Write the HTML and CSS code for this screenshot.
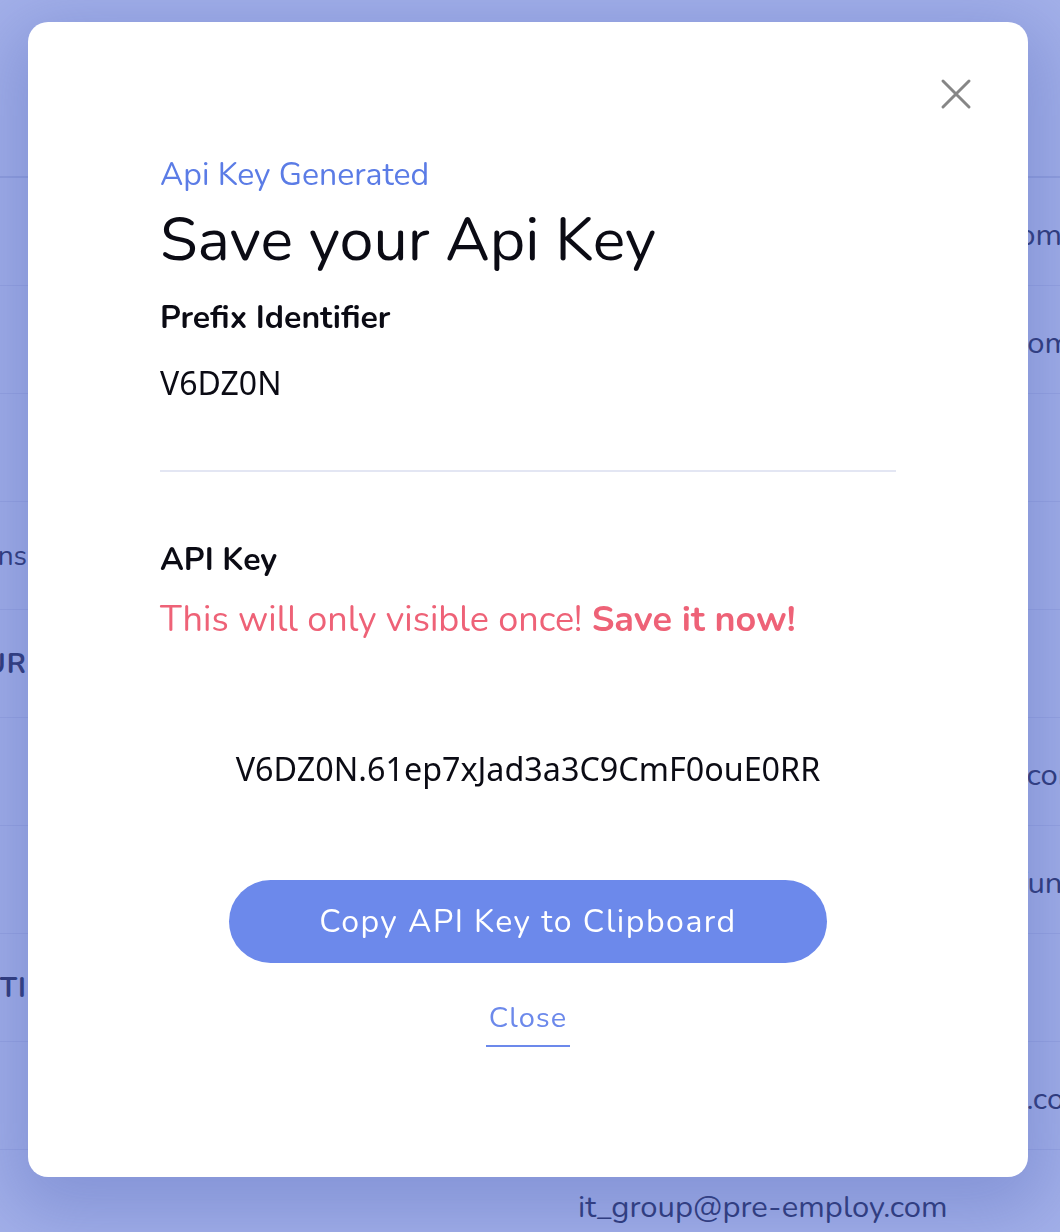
FILE: index.html
```html
<!DOCTYPE html>
<html lang="en">
<head>
<meta charset="utf-8">
<title>Save your Api Key</title>
<link rel="stylesheet" href="styles.css">
</head>
<body>
<div class="page">
  <div class="page-header"></div>
  <div class="table">
    <div class="row"><div class="cell-left"></div><div class="cell-mid"></div><div class="cell-email">recruitmentteam@pre-employ.com</div></div>
    <div class="row"><div class="cell-left"></div><div class="cell-mid"></div><div class="cell-email">compliancegroup@pre-employ.com</div></div>
    <div class="row"><div class="cell-left"></div><div class="cell-mid"></div><div class="cell-email"></div></div>
    <div class="row"><div class="cell-left"><span>Operations</span></div><div class="cell-mid"></div><div class="cell-email"></div></div>
    <div class="row"><div class="cell-left caps"><span>FEATUR</span></div><div class="cell-mid"></div><div class="cell-email"></div></div>
    <div class="row"><div class="cell-left"></div><div class="cell-mid"></div><div class="cell-email">talent.acquisitions@pre-employ.com</div></div>
    <div class="row"><div class="cell-left"></div><div class="cell-mid"></div><div class="cell-email">backgroundchecks@preemploy.fund</div></div>
    <div class="row"><div class="cell-left caps"><span>BUDGETI</span></div><div class="cell-mid"></div><div class="cell-email"></div></div>
    <div class="row"><div class="cell-left"></div><div class="cell-mid"></div><div class="cell-email">onboarding_teams@pre-employ.com</div></div>
    <div class="row"><div class="cell-left"></div><div class="cell-mid"></div><div class="cell-email">it_group@pre-employ.com</div></div>
  </div>
</div>

<div class="modal" role="dialog" aria-labelledby="modal-title">
  <button class="modal-close" aria-label="Close">
    <svg width="32" height="32" viewBox="0 0 32 32"><path d="M3 3 L29 29 M29 3 L3 29" stroke="#868686" stroke-width="3" stroke-linecap="round" fill="none"/></svg>
  </button>
  <div class="modal-body">
    <div class="subtitle">Api Key Generated</div>
    <h1 class="title" id="modal-title">Save your Api Key</h1>
    <div class="label">Prefix Identifier</div>
    <div class="value">V6DZ0N</div>
    <hr class="divider">
    <div class="label label-api">API Key</div>
    <div class="warning">This will only visible once! <strong>Save it now!</strong></div>
    <div class="key">V6DZ0N.61ep7xJad3a3C9CmF0ouE0RR</div>
    <div class="actions">
      <button class="copy-btn">Copy API Key to Clipboard</button>
      <a class="close-link" href="#">Close</a>
    </div>
  </div>
</div>
</body>
</html>
```
FILE: styles.css
```css
* { box-sizing: border-box; }
html, body { margin: 0; padding: 0; }
body {
  width: 1060px;
  height: 1232px;
  overflow: hidden;
  background: #a4b1ea;
  font-family: Nunito, Lato, "Noto Sans", sans-serif;
}
.page { width: 1060px; }
.page-header {
  height: 178px;
  border-bottom: 2px solid rgba(70, 90, 180, 0.18);
}
.table { display: flex; flex-direction: column; }
.row {
  display: grid;
  grid-template-columns: 27px 551px 1fr;
  height: 108px;
  align-items: center;
  border-bottom: 1px solid rgba(70, 90, 180, 0.12);
  color: #2d3877;
  white-space: nowrap;
}
.cell-left {
  overflow: hidden;
  display: flex;
  justify-content: flex-end;
  font-size: 28px;
}
.cell-left.caps { font-weight: 700; letter-spacing: 1px; }
.cell-email { overflow: hidden; font-size: 31px; padding-top: 6px; }

.modal {
  position: fixed;
  left: 28px;
  top: 22px;
  width: 1000px;
  height: 1155px;
  background: #fff;
  border-radius: 20px;
  box-shadow: 0 20px 70px 20px rgba(70, 90, 175, 0.33);
}
.modal-close {
  position: absolute;
  top: 56px;
  right: 56px;
  width: 32px;
  height: 32px;
  padding: 0;
  border: 0;
  background: none;
  cursor: pointer;
}
.modal-close svg { display: block; }
.modal-body {
  padding: 132px 132px 0;
  display: flex;
  flex-direction: column;
  align-items: flex-start;
}
.subtitle {
  color: #5b7ce6;
  font-size: 32px;
  line-height: 42px;
}
.title {
  margin: 8px 0 0;
  font-size: 61px;
  line-height: 72px;
  font-weight: 400;
  color: #0b0b14;
}
.label {
  margin-top: 24px;
  font-size: 32px;
  line-height: 36px;
  font-weight: 700;
  color: #0b0b14;
}
.value {
  margin-top: 29px;
  font-family: "Noto Sans", "Open Sans", sans-serif;
  font-size: 32px;
  line-height: 36px;
  color: #0b0b14;
}
.divider {
  align-self: stretch;
  margin: 69px 0 0;
  border: 0;
  height: 2px;
  background: #e3e6f3;
}
.label-api { margin-top: 70px; }
.warning {
  margin-top: 22px;
  font-size: 36px;
  line-height: 40px;
  color: #ee6277;
}
.warning strong { font-weight: 700; }
.key {
  align-self: center;
  margin-top: 110px;
  font-family: "Noto Sans", "Open Sans", sans-serif;
  font-size: 32.3px;
  line-height: 36px;
  color: #0b0b14;
}
.actions {
  align-self: stretch;
  display: flex;
  flex-direction: column;
  align-items: center;
  margin-top: 94px;
}
.copy-btn {
  width: 598px;
  height: 83px;
  border: 0;
  border-radius: 42px;
  background: #6c89eb;
  color: #fff;
  font-family: inherit;
  font-size: 32px;
  letter-spacing: 1.5px;
  cursor: pointer;
}
.close-link {
  margin-top: 37px;
  padding: 0 3px 9px;
  font-size: 29px;
  line-height: 36px;
  color: #6c89eb;
  text-decoration: none;
  letter-spacing: 1px;
  border-bottom: 2px solid #6c89eb;
}
```
